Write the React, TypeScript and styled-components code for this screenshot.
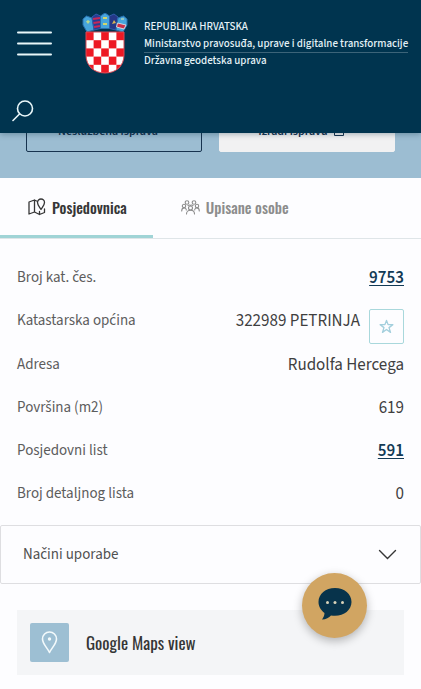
import React from "react";
import styled, { createGlobalStyle } from "styled-components";

const sans = `"Source Sans 3", "Noto Sans", sans-serif`;
const condensed = `Oswald, "Roboto Condensed", "Liberation Sans Narrow", sans-serif`;

const GlobalStyle = createGlobalStyle`
  *, *::before, *::after { box-sizing: border-box; }
  body {
    margin: 0;
    background: #fdfdff;
    color: #434343;
    font-family: ${sans};
  }
  button { font: inherit; color: inherit; cursor: pointer; }
  svg { display: block; flex: none; }
`;

const Header = styled.header`
  position: sticky;
  top: 0;
  z-index: 2;
  background: #00344f;
  color: #e6f3f8;
  padding: 13px 12px 11px;
  box-shadow: 0 1px 6px rgba(0, 40, 60, 0.35);
`;

const Brand = styled.div`
  display: flex;
  align-items: flex-start;
`;

const IconButton = styled.button`
  display: flex;
  padding: 0;
  border: 0;
  background: none;
`;

const MenuButton = styled(IconButton)`
  margin: 17px 30px 0 5px;
`;

const Ministry = styled.div`
  padding: 6px 0 0 16px;
  font-size: 11px;
  font-weight: 500;
  line-height: 16px;
  white-space: nowrap;
`;

const MinistryLine = styled.div<{ $ruled?: boolean }>`
  width: fit-content;
  border-bottom: 1px solid ${(p) => (p.$ruled ? "#3c6479" : "transparent")};
`;

const SearchRow = styled.div`
  display: flex;
  padding-top: 25px;
`;

const Actions = styled.section`
  display: grid;
  grid-template-columns: 1fr 1fr;
  gap: 17px;
  margin-top: -25px;
  padding: 0 26px 26px;
  background: #9cbdd2;
`;

const ActionButton = styled.button<{ $filled?: boolean }>`
  display: flex;
  align-items: center;
  justify-content: center;
  gap: 6px;
  height: 44px;
  padding: 3px 12px 0 0;
  border: 1px solid ${(p) => (p.$filled ? "#f1f1f2" : "#17334f")};
  border-radius: 2px;
  background: ${(p) => (p.$filled ? "#f1f1f2" : "transparent")};
  color: #17334f;
  font-size: 12px;
  font-weight: 600;
  line-height: 16px;
`;

const Tabs = styled.div`
  display: flex;
  border-bottom: 1px solid #dfe5e8;
`;

const Tab = styled.button<{ $active?: boolean }>`
  display: flex;
  align-items: center;
  gap: 6px;
  height: 60px;
  padding: 1px 26px 0 28px;
  border: 0;
  border-bottom: 3px solid ${(p) => (p.$active ? "#a0d4d6" : "transparent")};
  background: none;
  color: ${(p) => (p.$active ? "#363636" : "#8d8d8d")};
  font-family: ${condensed};
  font-size: 15px;
  font-weight: 500;
`;

const Details = styled.dl`
  display: flex;
  flex-direction: column;
  margin: 0;
  padding: 27px 17px 0;
`;

const Row = styled.div`
  display: flex;
  justify-content: space-between;
  min-height: 43px;
`;

const Label = styled.dt`
  color: #5c5c5c;
  font-size: 15px;
  line-height: 23px;
`;

const Value = styled.dd`
  display: flex;
  gap: 9px;
  margin: 0;
  color: #3f3f3f;
  font-size: 17px;
  line-height: 25px;
`;

const ValueLink = styled.a`
  color: #123a55;
  font-weight: 600;
  text-decoration: underline;
  text-underline-offset: 2px;
`;

const StarButton = styled.button`
  display: grid;
  place-items: center;
  width: 35px;
  height: 35px;
  margin-bottom: 9px;
  padding: 0;
  border: 1px solid #a9d8dc;
  border-radius: 2px;
  background: transparent;
`;

const Accordion = styled.button`
  display: flex;
  align-items: center;
  justify-content: space-between;
  width: 100%;
  height: 59px;
  padding: 0 23px 0 22px;
  border: 1px solid #dedee1;
  border-radius: 2px;
  background: transparent;
  color: #505050;
  font-size: 15px;
`;

const MapCard = styled.a`
  display: flex;
  align-items: center;
  gap: 17px;
  margin: 26px 17px 14px;
  padding: 13px;
  background: #f4f5f7;
  color: #353535;
  font-family: ${condensed};
  font-size: 17px;
  line-height: 28px;
  text-decoration: none;
`;

const PinTile = styled.span`
  display: grid;
  place-items: center;
  width: 39px;
  height: 39px;
  border-radius: 2px;
  background: #9dbfd3;
`;

const ChatButton = styled.button`
  position: fixed;
  right: 54px;
  bottom: 51px;
  display: grid;
  place-items: center;
  width: 65px;
  height: 65px;
  padding: 0 0 4px;
  border: 0;
  border-radius: 50%;
  background: #d1a562;
  box-shadow: 0 3px 10px rgba(0, 0, 0, 0.28);
`;

const MenuIcon = () => (
  <svg width="35" height="26" viewBox="0 0 35 26" stroke="#e9f7fa" strokeWidth="2" strokeLinecap="round" aria-hidden="true">
    <path d="M1 2.500H34M1 13.500H34M1 24.500H34" />
  </svg>
);

const SearchIcon = () => (
  <svg width="22" height="22" viewBox="0 0 22 22" fill="none" stroke="#e9f7fa" strokeWidth="1.6" strokeLinecap="round" aria-hidden="true">
    <circle cx="13" cy="8.500" r="7.500" />
    <path d="M7.500 14 1 20.500" />
  </svg>
);

const squares = Array.from({ length: 25 }, (_, i) => ({ col: i % 5, row: Math.floor(i / 5) }));

const CoatOfArms = () => (
  <svg width="46" height="62" viewBox="0 0 46 62" role="img" aria-label="Grb Republike Hrvatske">
    <defs>
      <clipPath id="shield">
        <path d="M4 19H42V42C42 53 34 60 23 60S4 53 4 42Z" />
      </clipPath>
    </defs>
    <path d="M1 6 4.500 3 10 5 12 17 5 19 1 12Z" fill="#46a5dc" stroke="#2870ad" />
    <path d="M10 4 14 1 18.500 3V15.500L12 17Z" fill="#283c93" stroke="#315caa" />
    <path d="M11 6 18 5M11.500 10 18 9M12 14 18 13" stroke="#c62958" strokeWidth="2" />
    <path d="M18.500 3 23 0 27.500 3V15.500H18.500Z" fill="#46a5dc" stroke="#2870ad" />
    <path d="M27.500 3 32 1 36 4 34 17 27.500 15.500Z" fill="#253787" stroke="#315caa" />
    <path d="M36 5 41.500 3 45 6V12L41 19 34 17Z" fill="#46a5dc" stroke="#2870ad" />
    <path d="M35.500 10 44 12 42 16 34.500 14Z" fill="#c9304a" stroke="#e9edf0" strokeWidth=".8" />
    <path d="M4 8.500 6 7 8 8.500 6 11Z" fill="#b5d890" />
    <path d="M21 5h4M21 11h4" stroke="#d0d66c" strokeWidth="2" />
    <path d="M30 11 32 7 34 10Z" fill="#d8b455" />
    <path d="M39 6h3" stroke="#dfe7a0" />
    <g clipPath="url(#shield)">
      <rect x="4" y="19" width="38" height="41" fill="#fff" />
      {squares
        .filter(({ col, row }) => (col + row) % 2 === 0)
        .map(({ col, row }) => (
          <rect key={`${col}-${row}`} x={4 + col * 7.6} y={19 + row * 8.2} width="7.6" height="8.2" fill="#ed1924" />
        ))}
    </g>
    <path d="M4 19H42V42C42 53 34 60 23 60S4 53 4 42Z" fill="none" stroke="#dc4854" strokeWidth="1" />
  </svg>
);

const MapIcon = () => (
  <svg width="18" height="18" viewBox="0 0 18 18" fill="none" stroke="#363636" strokeWidth="1.3" strokeLinejoin="round" strokeLinecap="round" aria-hidden="true">
    <path d="M8.500 3 6.500 2 1 4V16L6.500 14 11.500 16.500 16.500 14.500V11M6.500 2V14M11.500 13.500V16.500" />
    <path d="M13 11.500C11.500 9 9.500 7 9.500 4.500A3.500 3.500 0 0 1 16.500 4.500C16.500 7 14.500 9 13 11.500Z" />
  </svg>
);

const PeopleIcon = () => (
  <svg width="19" height="15" viewBox="0 0 19 15" fill="none" stroke="#8d8d8d" strokeWidth="1.1" strokeLinecap="round" aria-hidden="true">
    <circle cx="6" cy="2.500" r="1.800" />
    <circle cx="13" cy="2.500" r="1.800" />
    <circle cx="3" cy="6" r="1.700" />
    <circle cx="16" cy="6" r="1.700" />
    <circle cx="9.500" cy="8" r="2" />
    <path d="M.7 11C.7 7 5.300 7 5.300 10M18.300 11C18.300 7 13.700 7 13.700 10M5.500 14C5.500 9 13.500 9 13.500 14M7 5.500Q8.800 4.500 9.500 5.500Q10.200 4.500 12 5.500" />
  </svg>
);

const StarIcon = () => (
  <svg width="15" height="15" viewBox="0 0 16 16" fill="none" stroke="#a3cfdd" strokeWidth="1.4" strokeLinejoin="round" aria-hidden="true">
    <path d="M8 1.500 9.700 6H14.800L10.700 9.200 12.300 14.300 8 11.200 3.700 14.300 5.300 9.200 1.200 6H6.300Z" />
  </svg>
);

const ChevronIcon = () => (
  <svg width="19" height="11" viewBox="0 0 19 11" fill="none" stroke="#363636" strokeWidth="1.4" strokeLinecap="round" aria-hidden="true">
    <path d="M1.500 1.500 9.500 9.500 17.500 1.500" />
  </svg>
);

const PinIcon = () => (
  <svg width="17" height="23" viewBox="0 0 17 23" fill="none" stroke="#f3fafc" strokeWidth="1.6" strokeLinejoin="round" aria-hidden="true">
    <path d="M8.500 21.500C6.500 17 1.500 13 1.500 8A7 7 0 0 1 15.500 8C15.500 13 10.500 17 8.500 21.500Z" />
    <circle cx="8.500" cy="8" r="1.700" fill="#f3fafc" stroke="none" />
  </svg>
);

const ChatIcon = () => (
  <svg width="34" height="32" viewBox="0 0 34 32" aria-hidden="true">
    <path d="M17 0C7.600 0 .5 6 .5 14C.5 18.500 3 22.500 6.500 25C6.500 28 5 30 4 31.500C8 31.500 11 29.500 13 27.500C24 29.500 33.500 23 33.500 14C33.500 6 26.400 0 17 0Z" fill="#07334b" />
    <g fill="#d9d3b9">
      <circle cx="9.500" cy="14.500" r="1.500" />
      <circle cx="17" cy="14.500" r="1.500" />
      <circle cx="24.500" cy="14.500" r="1.500" />
    </g>
  </svg>
);

const PrintIcon = () => (
  <svg width="10" height="10" viewBox="0 0 10 10" fill="none" stroke="#17334f" aria-hidden="true">
    <path d="M.5 3.500H9.500V8.500H.5ZM2.500 3V.5H7.500V3" />
  </svg>
);

export default function App() {
  return (
    <>
      <GlobalStyle />
      <Header>
        <Brand>
          <MenuButton aria-label="Izbornik"><MenuIcon /></MenuButton>
          <CoatOfArms />
          <Ministry>
            <MinistryLine>REPUBLIKA HRVATSKA</MinistryLine>
            <MinistryLine $ruled>Ministarstvo pravosuđa, uprave i digitalne transformacije</MinistryLine>
            <MinistryLine>Državna geodetska uprava</MinistryLine>
          </Ministry>
        </Brand>
        <SearchRow>
          <IconButton aria-label="Pretraživanje"><SearchIcon /></IconButton>
        </SearchRow>
      </Header>
      <main>
        <Actions>
          <ActionButton>Neslužbena isprava</ActionButton>
          <ActionButton $filled>Izradi ispravu <PrintIcon /></ActionButton>
        </Actions>
        <Tabs role="tablist">
          <Tab role="tab" aria-selected="true" $active><MapIcon />Posjedovnica</Tab>
          <Tab role="tab" aria-selected="false"><PeopleIcon />Upisane osobe</Tab>
        </Tabs>
        <Details>
          <Row><Label>Broj kat. čes.</Label><Value><ValueLink href="#cestica">9753</ValueLink></Value></Row>
          <Row>
            <Label>Katastarska općina</Label>
            <Value>322989 PETRINJA<StarButton aria-label="Dodaj u favorite"><StarIcon /></StarButton></Value>
          </Row>
          <Row><Label>Adresa</Label><Value>Rudolfa Hercega</Value></Row>
          <Row><Label>Površina (m2)</Label><Value>619</Value></Row>
          <Row><Label>Posjedovni list</Label><Value><ValueLink href="#list">591</ValueLink></Value></Row>
          <Row><Label>Broj detaljnog lista</Label><Value>0</Value></Row>
        </Details>
        <Accordion aria-expanded="false">Načini uporabe<ChevronIcon /></Accordion>
        <MapCard href="#karta"><PinTile><PinIcon /></PinTile>Google Maps view</MapCard>
      </main>
      <ChatButton aria-label="Razgovor"><ChatIcon /></ChatButton>
    </>
  );
}
